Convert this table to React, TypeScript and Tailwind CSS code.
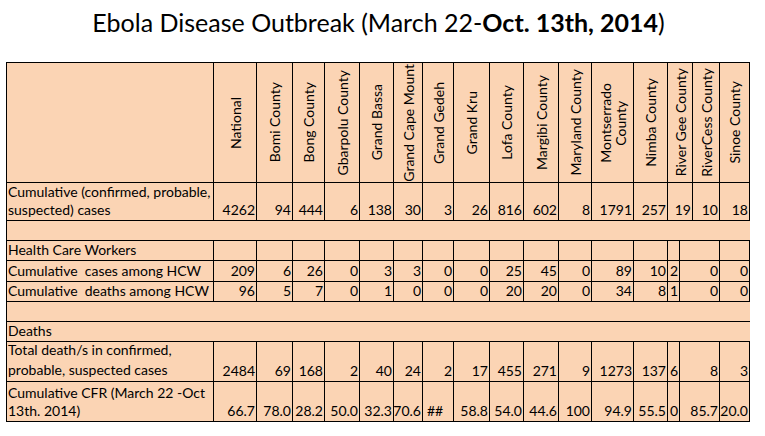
import type { ReactNode } from "react";

type Col = { name: ReactNode; w: string };

const cols: Col[] = [
  { name: "National", w: "w-[43px]" },
  { name: "Bomi County", w: "w-[36px]" },
  { name: "Bong County", w: "w-[32px]" },
  { name: "Gbarpolu County", w: "w-[35px]" },
  { name: "Grand Bassa", w: "w-[34px]" },
  { name: "Grand Cape Mount", w: "w-[29px]" },
  { name: "Grand Gedeh", w: "w-[31px]" },
  { name: "Grand Kru", w: "w-[36px]" },
  { name: "Lofa County", w: "w-[34px]" },
  { name: "Margibi County", w: "w-[35px]" },
  { name: "Maryland County", w: "w-[33px]" },
  {
    name: (
      <>
        Montserrado
        <br />
        County
      </>
    ),
    w: "w-[42px]"
  },
  { name: "Nimba County", w: "w-[34px]" },
  { name: "River Gee County", w: "w-[25px]" },
  { name: "RiverCess County", w: "w-[27px]" },
  { name: "Sinoe County", w: "w-[30px]" }
];

// lower rows split the River Gee / RiverCess columns differently
const altW = [
  "w-[43px]",
  "w-[36px]",
  "w-[32px]",
  "w-[35px]",
  "w-[34px]",
  "w-[29px]",
  "w-[31px]",
  "w-[36px]",
  "w-[34px]",
  "w-[35px]",
  "w-[33px]",
  "w-[42px]",
  "w-[34px]",
  "w-[12px]",
  "w-[40px]",
  "w-[30px]"
];

const cases = ["4262", "94", "444", "6", "138", "30", "3", "26", "816", "602", "8", "1791", "257", "19", "10", "18"];
const hcwCases = ["209", "6", "26", "0", "3", "3", "0", "0", "25", "45", "0", "89", "10", "2", "0", "0"];
const hcwDeaths = ["96", "5", "7", "0", "1", "0", "0", "0", "20", "20", "0", "34", "8", "1", "0", "0"];
const deaths = ["2484", "69", "168", "2", "40", "24", "2", "17", "455", "271", "9", "1273", "137", "6", "8", "3"];
const cfr = ["66.7", "78.0", "28.2", "50.0", "32.3", "70.6", "##", "58.8", "54.0", "44.6", "100", "94.9", "55.5", "0", "85.7", "20.0"];

function Label({ children, lead = "leading-[18px]" }: { children: ReactNode; lead?: string }) {
  return (
    <div className={`flex w-[207px] shrink-0 items-end border-r border-black pb-[1px] pl-[1px] whitespace-nowrap ${lead}`}>
      <div>{children}</div>
    </div>
  );
}

function Row({ h, children }: { h: string; children: ReactNode }) {
  return <div className={`flex ${h} border-b border-black`}>{children}</div>;
}

function Values({ values, widths }: { values: string[]; widths: string[] }) {
  return (
    <>
      {values.map((v, i) => (
        <div
          key={i}
          className={`flex shrink-0 items-end border-r border-black pb-[1px] pr-[1px] leading-[18px] ${widths[i]} ${
            v === "##" ? "justify-start pl-[4px]" : "justify-end"
          }`}
        >
          {v}
        </div>
      ))}
    </>
  );
}

export default function App() {
  const mainW = cols.map((c) => c.w);
  const blank = altW.map(() => "");
  return (
    <div className="h-[436px] w-[765px] bg-white text-black [font-family:Lato,'Noto_Sans',sans-serif]">
      <div className="ml-[7px] w-[743px] pt-[4px] text-center text-[25px] leading-[36px]">
        Ebola Disease Outbreak (March 22-<b>Oct. 13th, 2014</b>)
      </div>
      <div className="ml-[6px] mt-[22px] w-[744px] border-l border-t border-black bg-[#fbd4b4] text-[14px]">
        <Row h="h-[120px]">
          <div className="w-[207px] shrink-0 border-r border-black" />
          {cols.map((c, i) => (
            <div key={i} className={`flex shrink-0 items-center justify-center border-r border-black ${c.w}`}>
              <span className="rotate-180 whitespace-nowrap text-center leading-[15px] [writing-mode:vertical-rl]">
                {c.name}
              </span>
            </div>
          ))}
        </Row>
        <Row h="h-[38px]">
          <Label>
            Cumulative (confirmed, probable,
            <br />
            suspected) cases
          </Label>
          <Values values={cases} widths={mainW} />
        </Row>
        <Row h="h-[20px]">
          <div />
        </Row>
        <Row h="h-[20px]">
          <Label>Health Care Workers</Label>
          <Values values={blank} widths={altW} />
        </Row>
        <Row h="h-[21px]">
          <Label>Cumulative&nbsp; cases among HCW</Label>
          <Values values={hcwCases} widths={altW} />
        </Row>
        <Row h="h-[20px]">
          <Label>Cumulative&nbsp; deaths among HCW</Label>
          <Values values={hcwDeaths} widths={altW} />
        </Row>
        <Row h="h-[20px]">
          <div />
        </Row>
        <Row h="h-[20px]">
          <div className="flex items-end pb-[1px] pl-[1px] leading-[18px]">Deaths</div>
        </Row>
        <Row h="h-[40px]">
          <Label lead="leading-[20px]">
            Total death/s in confirmed,
            <br />
            probable, suspected cases
          </Label>
          <Values values={deaths} widths={altW} />
        </Row>
        <Row h="h-[40px]">
          <Label>
            Cumulative CFR (March 22 -Oct
            <br />
            13th. 2014)
          </Label>
          <Values values={cfr} widths={altW} />
        </Row>
      </div>
    </div>
  );
}
